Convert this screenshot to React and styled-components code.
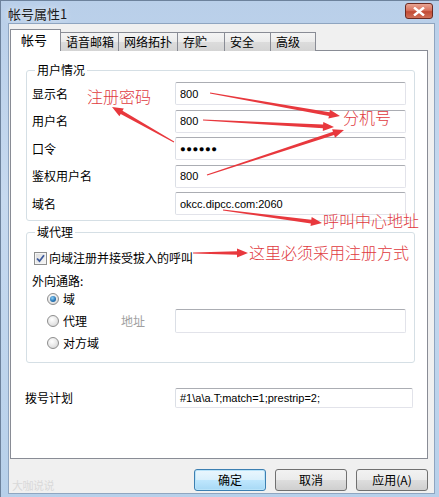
import styled, { createGlobalStyle, css } from 'styled-components';

const GlobalStyle = createGlobalStyle`
  html, body { margin: 0; padding: 0; background: #fff; }
  body { width: 439px; height: 497px; overflow: hidden; }
`;

const cjk = `"Noto Sans CJK SC", "Noto Sans", sans-serif`;
const latin = `"Liberation Sans", "Noto Sans CJK SC", sans-serif`;

export default function App() {
  return (
    <>
      <GlobalStyle />
      <Window>
        <TitleBar>
          <Title>帐号属性1</Title>
          <CloseButton>
            <svg width="12" height="9" viewBox="0 0 12 9">
              <path d="M1 0.5 L11 8.5 M11 0.5 L1 8.5" stroke="#fff" strokeWidth="2.4" />
            </svg>
          </CloseButton>
        </TitleBar>
        <Client>
          <TabStrip>
            <Tab $active $w={51}>帐号</Tab>
            <Tab $w={59}>语音邮箱</Tab>
            <Tab $w={60}>网络拓扑</Tab>
            <Tab $w={48}>存贮</Tab>
            <Tab $w={47}>安全</Tab>
            <Tab $w={46}>高级</Tab>
          </TabStrip>
          <Panel>
            <Group>
              <legend>用户情况</legend>
              <FieldGrid>
                <Label>显示名</Label>
                <TextBox>800</TextBox>
                <Label>用户名</Label>
                <TextBox>800</TextBox>
                <Label>口令</Label>
                <TextBox $password>●●●●●●</TextBox>
                <Label>鉴权用户名</Label>
                <TextBox>800</TextBox>
                <Label>域名</Label>
                <TextBox>okcc.dipcc.com:2060</TextBox>
              </FieldGrid>
            </Group>
            <Group $second>
              <legend>域代理</legend>
              <CheckRow>
                <CheckBox>
                  <svg width="9" height="9" viewBox="0 0 9 9">
                    <path d="M1 4.5 L3.5 7.2 L8 1.2" fill="none" stroke="#3d5a9c" strokeWidth="1.8" />
                  </svg>
                </CheckBox>
                <Label>向域注册并接受拔入的呼叫</Label>
              </CheckRow>
              <SubLabel>外向通路:</SubLabel>
              <RadioRow $first>
                <Radio $on />
                <Label>域</Label>
              </RadioRow>
              <RadioRow $tall>
                <Radio />
                <Label $w={54}>代理</Label>
                <Label $muted $w={50}>地址</Label>
                <TextBox $flex />
              </RadioRow>
              <RadioRow>
                <Radio />
                <Label>对方域</Label>
              </RadioRow>
            </Group>
            <PlanRow>
              <Label>拨号计划</Label>
              <TextBox $short>#1\a\a.T;match=1;prestrip=2;</TextBox>
            </PlanRow>
          </Panel>
          <ButtonBar>
            <Watermark>大咖说说</Watermark>
            <Button $default>确定</Button>
            <Button>取消</Button>
            <Button>应用(A)</Button>
          </ButtonBar>
        </Client>

        <Annotations width="439" height="497" viewBox="0 0 439 497">
          <Arrow from={[210, 93]} to={[340, 116]} />
          <Arrow from={[203, 120]} to={[334, 127]} />
          <Arrow from={[207, 175]} to={[344, 130]} />
          <Arrow from={[174, 142]} to={[112, 107]} />
          <Arrow from={[223, 210]} to={[322, 223]} />
          <Arrow from={[193, 253]} to={[248, 253]} />
        </Annotations>
        <Note $x={87} $y={86}>注册密码</Note>
        <Note $x={343} $y={107}>分机号</Note>
        <Note $x={323} $y={210}>呼叫中心地址</Note>
        <Note $x={249} $y={242}>这里必须采用注册方式</Note>
      </Window>
    </>
  );
}

function Arrow({ from, to }) {
  const [x1, y1] = from;
  const [x2, y2] = to;
  const dx = x2 - x1;
  const dy = y2 - y1;
  const len = Math.hypot(dx, dy);
  const ux = dx / len;
  const uy = dy / len;
  const nx = -uy;
  const ny = ux;
  const head = 11;
  const bx = x2 - ux * head;
  const by = y2 - uy * head;
  const p = (x, y) => `${x.toFixed(1)},${y.toFixed(1)}`;
  const pts = [
    p(x1 + nx * 0.5, y1 + ny * 0.5),
    p(bx + nx * 1.8, by + ny * 1.8),
    p(bx + nx * 4.5, by + ny * 4.5),
    p(x2, y2),
    p(bx - nx * 4.5, by - ny * 4.5),
    p(bx - nx * 1.8, by - ny * 1.8),
    p(x1 - nx * 0.5, y1 - ny * 0.5),
  ].join(' ');
  return <polygon points={pts} fill="#e8383d" />;
}

const Window = styled.div`
  position: relative;
  width: 439px;
  height: 497px;
  box-sizing: border-box;
  display: flex;
  flex-direction: column;
  padding: 0 4px 3px 7px;
  background: linear-gradient(180deg, #b9cfe9 0%, #c6d9ef 40%, #b7d0ea 100%);
  border-left: 1px solid #6d829c;
  border-top: 1px solid #6d829c;
  font-family: ${cjk};
`;

const TitleBar = styled.div`
  height: 22px;
  display: flex;
  align-items: center;
  justify-content: space-between;
`;

const Title = styled.span`
  font-size: 13px;
  color: #1b1b1b;
  text-shadow: 0 0 6px rgba(255, 255, 255, 0.9);
  padding-top: 2px;
`;

const CloseButton = styled.div`
  width: 26px;
  height: 14px;
  margin-right: 2px;
  margin-top: -2px;
  border: 1px solid #6b2a22;
  border-radius: 3px;
  background: linear-gradient(180deg, #e8a493 0%, #d8735f 45%, #c24b35 55%, #d0715a 100%);
  display: flex;
  align-items: center;
  justify-content: center;
`;

const Client = styled.div`
  flex: 1;
  background: #f0f0f0;
  border: 1px solid #8fa5c0;
  padding: 5px 6px 0 1px;
  display: flex;
  flex-direction: column;
`;

const TabStrip = styled.div`
  display: flex;
  align-items: flex-end;
  height: 22px;
  position: relative;
  z-index: 1;
  margin-bottom: -1px;
`;

const Tab = styled.div`
  box-sizing: border-box;
  width: ${(p) => p.$w}px;
  height: 19px;
  border: 1px solid #898c95;
  border-bottom: none;
  margin-left: -1px;
  padding-left: 5px;
  font-size: 12px;
  line-height: 17px;
  color: #000;
  background: linear-gradient(180deg, #f4f4f4 0%, #ebebeb 50%, #dcdcdc 51%, #d4d4d4 100%);
  &:first-child { margin-left: 0; }
  ${(p) =>
    p.$active &&
    css`
      height: 22px;
      background: #fff;
      padding-left: 10px;
      font-size: 13px;
      line-height: 20px;
      position: relative;
      z-index: 2;
    `}
`;

const Panel = styled.div`
  height: 409px;
  box-sizing: border-box;
  background: #fff;
  border: 1px solid #898c95;
  padding: 12px 12px 0 15px;
  display: flex;
  flex-direction: column;
`;

const Group = styled.fieldset`
  margin: ${(p) => (p.$second ? '4px 0 0' : '0')};
  border: 1px solid #d5dfe5;
  border-radius: 3px;
  padding: 5px 8px ${(p) => (p.$second ? '12px' : '5px')} 5px;
  min-width: 0;
  display: flex;
  flex-direction: column;
  legend {
    font-size: 12px;
    line-height: 14px;
    padding: 0 2px;
    margin-left: 3px;
    color: #000;
  }
`;

const FieldGrid = styled.div`
  display: grid;
  grid-template-columns: 143px 1fr;
  row-gap: 4.5px;
  align-items: center;
`;

const Label = styled.span`
  font-size: 12px;
  line-height: 14px;
  color: ${(p) => (p.$muted ? '#a0a0a0' : '#000')};
  white-space: nowrap;
  ${(p) => p.$w && `width: ${p.$w}px; flex: none;`}
`;

const TextBox = styled.div`
  box-sizing: border-box;
  height: ${(p) => (p.$short ? 20 : p.$flex ? 24 : 23)}px;
  ${(p) => p.$flex && 'flex: 1;'}
  ${(p) => p.$short && 'width: 238px;'}
  border: 1px solid #e2e3ea;
  border-top-color: #abadb3;
  border-left-color: #dbdfe6;
  border-radius: 2px;
  background: #fff;
  padding: 0 4px;
  font-family: ${latin};
  font-size: ${(p) => (p.$password ? '9.5px' : '11px')};
  letter-spacing: ${(p) => (p.$password ? '0.5px' : '0')};
  color: #000;
  display: flex;
  align-items: center;
`;

const CheckRow = styled.div`
  display: flex;
  align-items: center;
  gap: 2px;
  margin: 7px 0 0 2px;
  height: 14px;
`;

const CheckBox = styled.div`
  box-sizing: border-box;
  width: 13px;
  height: 13px;
  border: 1px solid #8e8f8f;
  background: linear-gradient(135deg, #dcdcdc 0%, #f6f6f6 100%);
  box-shadow: inset 0 0 0 1px #f4f4f4;
  display: flex;
  align-items: center;
  justify-content: center;
`;

const SubLabel = styled.div`
  font-size: 12px;
  line-height: 14px;
  margin-top: 9px;
`;

const RadioRow = styled.div`
  display: flex;
  align-items: center;
  gap: 4px;
  padding-left: 15px;
  height: ${(p) => (p.$tall ? 24 : 14)}px;
  margin-top: ${(p) => (p.$first ? 4 : 3)}px;
`;

const Radio = styled.div`
  box-sizing: border-box;
  width: 12px;
  height: 12px;
  flex: none;
  border-radius: 50%;
  border: 1px solid #8d8d8d;
  background: radial-gradient(circle at 40% 35%, #ffffff 0%, #e6e6e6 55%, #cfcfcf 100%);
  display: flex;
  align-items: center;
  justify-content: center;
  &::after {
    content: '';
    display: ${(p) => (p.$on ? 'block' : 'none')};
    width: 6px;
    height: 6px;
    border-radius: 50%;
    background: radial-gradient(circle at 40% 35%, #8ed0f5 0%, #2a78b8 55%, #0e4c86 100%);
  }
`;

const PlanRow = styled.div`
  display: grid;
  grid-template-columns: 150px auto;
  align-items: center;
  margin: 25px 0 0 -1px;
`;

const ButtonBar = styled.div`
  display: flex;
  justify-content: flex-end;
  align-items: center;
  gap: 9px;
  margin-top: 8px;
`;

const Watermark = styled.span`
  margin-right: auto;
  margin-top: 10px;
  font-size: 11px;
  color: #d9d9d9;
  letter-spacing: -0.5px;
  padding-left: 2px;
`;

const Button = styled.div`
  box-sizing: border-box;
  width: 72px;
  height: 22px;
  border: 1px solid #707070;
  border-radius: 3px;
  background: linear-gradient(180deg, #f2f2f2 0%, #ebebeb 48%, #dddddd 52%, #cfcfcf 100%);
  font-size: 12px;
  line-height: 20px;
  text-align: center;
  color: #000;
  ${(p) =>
    p.$default &&
    css`
      border-color: #3c7fb1;
      box-shadow: inset 0 0 0 1px #b9e3f9;
      background: linear-gradient(180deg, #eaf6fd 0%, #d9f0fc 48%, #bee6fd 52%, #a7d9f5 100%);
    `}
`;

const Annotations = styled.svg`
  position: absolute;
  left: -1px;
  top: -1px;
  pointer-events: none;
`;

const Note = styled.span`
  position: absolute;
  left: ${(p) => p.$x - 1}px;
  top: ${(p) => p.$y - 1}px;
  font-family: ${cjk};
  font-weight: 300;
  font-size: 16px;
  line-height: 20px;
  color: #e0393e;
  white-space: nowrap;
`;
